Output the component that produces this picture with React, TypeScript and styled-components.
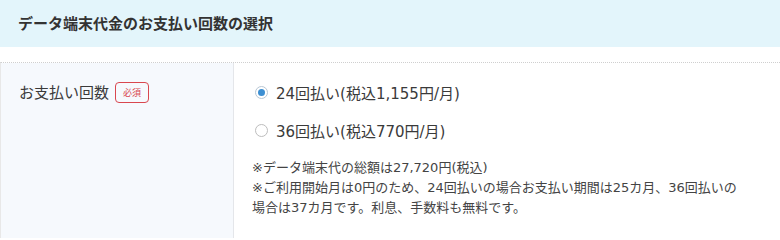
import styled, { createGlobalStyle } from 'styled-components';

const GlobalStyle = createGlobalStyle`
  body {
    margin: 0;
    background: #ffffff;
    color: #333333;
    font-family: "DejaVu Sans", "Noto Sans CJK JP", sans-serif;
  }
`;

const Section = styled.section`
  width: 780px;
`;

const SectionTitle = styled.h2`
  margin: 0;
  height: 47px;
  padding: 0 18px 2px;
  box-sizing: border-box;
  display: flex;
  align-items: center;
  background-color: #e3f5fb;
  font-family: "Noto Sans CJK JP", sans-serif;
  font-size: 15px;
  font-weight: 700;
  color: #333333;
`;

const FormTable = styled.div`
  margin-top: 15px;
  display: grid;
  grid-template-columns: 233px 1fr;
  border-top: 1px dotted #cfcfcf;
  border-left: 1px solid #e8e8e8;
`;

const LabelCell = styled.div`
  display: flex;
  align-items: flex-start;
  gap: 6px;
  padding: 16px 18px;
  background-color: #f6f9fd;
  border-right: 1px solid #e4e6ea;
`;

const LabelText = styled.span`
  font-family: "Noto Sans CJK JP", sans-serif;
  font-size: 15px;
  line-height: 26px;
  color: #3a3a3a;
`;

const RequiredBadge = styled.span`
  margin-top: 3px;
  height: 19px;
  padding: 0 7px;
  display: inline-flex;
  align-items: center;
  border: 1px solid #d9474f;
  border-radius: 4px;
  color: #d9474f;
  font-family: "Noto Sans CJK JP", sans-serif;
  font-size: 9px;
  line-height: 1;
`;

const ContentCell = styled.div`
  padding: 16px 36px 20px 21px;
`;

const OptionList = styled.div`
  display: flex;
  flex-direction: column;
  gap: 12px;
`;

const OptionRow = styled.label`
  display: flex;
  align-items: center;
  gap: 8px;
  height: 26px;
  font-size: 15px;
  color: #3a3a3a;
  cursor: pointer;
`;

const RadioMark = styled.span<{ $checked?: boolean }>`
  width: 13px;
  height: 13px;
  flex: none;
  box-sizing: border-box;
  border-radius: 50%;
  border: 1px solid ${({ $checked }) => ($checked ? '#b9c7d4' : '#bdbdbd')};
  background-color: #ffffff;
  display: flex;
  align-items: center;
  justify-content: center;

  &::after {
    content: '';
    width: 7px;
    height: 7px;
    border-radius: 50%;
    background-color: ${({ $checked }) => ($checked ? '#3d8fd2' : 'transparent')};
  }
`;

const Note = styled.p`
  margin: 15px 0 0 -3px;
  font-size: 13px;
  line-height: 20px;
  color: #444444;
`;

const options = [
  { id: '24', label: '24回払い(税込1,155円/月)', checked: true },
  { id: '36', label: '36回払い(税込770円/月)', checked: false },
];

export default function App() {
  return (
    <>
      <GlobalStyle />
      <Section>
        <SectionTitle>データ端末代金のお支払い回数の選択</SectionTitle>
        <FormTable>
          <LabelCell>
            <LabelText>お支払い回数</LabelText>
            <RequiredBadge>必須</RequiredBadge>
          </LabelCell>
          <ContentCell>
            <OptionList>
              {options.map(opt => (
                <OptionRow key={opt.id}>
                  <RadioMark $checked={opt.checked} />
                  {opt.label}
                </OptionRow>
              ))}
            </OptionList>
            <Note>
              ※データ端末代の総額は27,720円(税込)
              <br />
              ※ご利用開始月は0円のため、24回払いの場合お支払い期間は25カ月、36回払いの場合は37カ月です。利息、手数料も無料です。
            </Note>
          </ContentCell>
        </FormTable>
      </Section>
    </>
  );
}
